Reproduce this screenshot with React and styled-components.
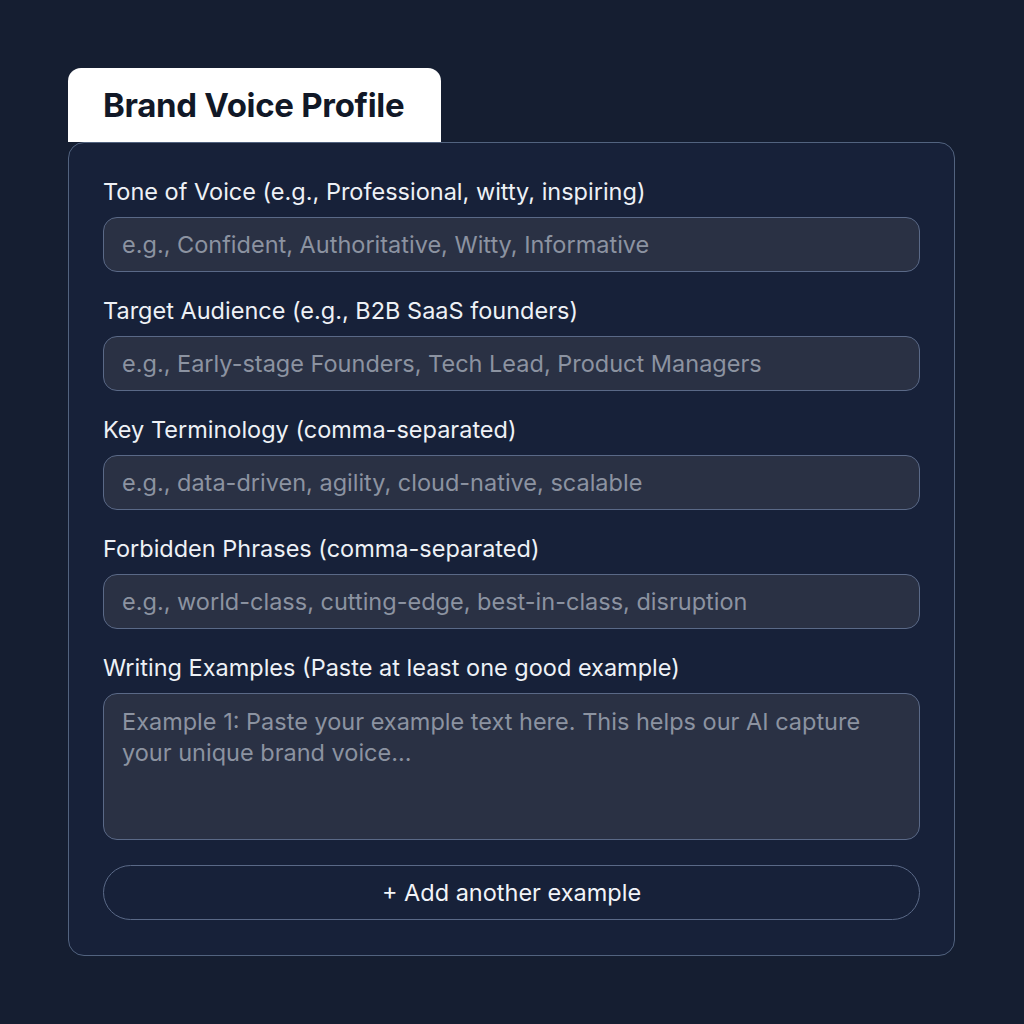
import React from 'react'
import styled, { createGlobalStyle } from 'styled-components'

const GlobalStyle = createGlobalStyle`
  html, body {
    margin: 0;
    padding: 0;
    background: #151e31;
    font-family: Inter, "Noto Sans", "Liberation Sans", sans-serif;
  }
`

const Page = styled.div`
  width: 1024px;
  height: 1024px;
  box-sizing: border-box;
  padding: 68px 68px 0 68px;
  display: flex;
  flex-direction: column;
`

const Tab = styled.div`
  align-self: flex-start;
  width: 373px;
  height: 74px;
  box-sizing: border-box;
  background: #ffffff;
  border-radius: 13px 13px 0 0;
  padding: 17px 0 0 35px;
`

const Title = styled.h1`
  margin: 0;
  font-size: 33px;
  line-height: 40px;
  font-weight: 700;
  color: #111827;
  letter-spacing: -0.3px;
`

const Card = styled.div`
  width: 887px;
  box-sizing: border-box;
  border: 1px solid #52637f;
  border-radius: 16px;
  background: #172139;
  padding: 35px 34px 35px 34px;
  display: flex;
  flex-direction: column;
  gap: 25px;
`

const Field = styled.div`
  display: flex;
  flex-direction: column;
  gap: 11px;
`

const Label = styled.label`
  font-size: 23.5px;
  line-height: 28px;
  color: #eef1f6;
  font-weight: 400;
`

const Input = styled.div`
  height: ${p => (p.tall ? 147 : 55)}px;
  box-sizing: border-box;
  border: 1px solid #5a6987;
  border-radius: 14px;
  background: #2a3144;
  padding: ${p => (p.tall ? '12px 18px' : '0 18px')};
  display: flex;
  align-items: ${p => (p.tall ? 'flex-start' : 'center')};
  font-size: 23.5px;
  line-height: 31px;
  color: #8c93a1;
`

const AddButton = styled.button`
  height: 55px;
  border: 1px solid #5a6987;
  border-radius: 28px;
  background: transparent;
  color: #f2f4f8;
  font-family: inherit;
  font-size: 23.5px;
  cursor: pointer;
`

const fields = [
  ['Tone of Voice (e.g., Professional, witty, inspiring)', 'e.g., Confident, Authoritative, Witty, Informative'],
  ['Target Audience (e.g., B2B SaaS founders)', 'e.g., Early-stage Founders, Tech Lead, Product Managers'],
  ['Key Terminology (comma-separated)', 'e.g., data-driven, agility, cloud-native, scalable'],
  ['Forbidden Phrases (comma-separated)', 'e.g., world-class, cutting-edge, best-in-class, disruption'],
]

export default function App() {
  return (
    <>
      <GlobalStyle />
      <Page>
        <Tab>
          <Title>Brand Voice Profile</Title>
        </Tab>
        <Card>
          {fields.map(([label, ph]) => (
            <Field key={label}>
              <Label>{label}</Label>
              <Input>{ph}</Input>
            </Field>
          ))}
          <Field>
            <Label>Writing Examples (Paste at least one good example)</Label>
            <Input tall>
              Example 1: Paste your example text here. This helps our AI capture your unique brand voice...
            </Input>
          </Field>
          <AddButton>+ Add another example</AddButton>
        </Card>
      </Page>
    </>
  )
}
